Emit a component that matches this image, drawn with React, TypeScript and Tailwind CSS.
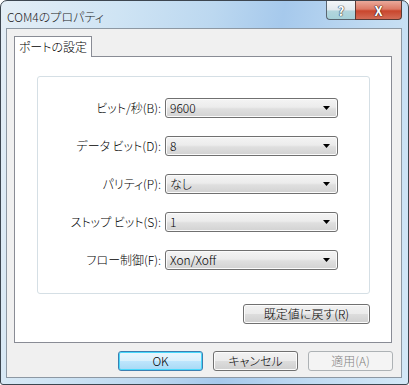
const ROWS = [
  { label: 'ビット/秒(B):', value: '9600' },
  { label: 'データ ビット(D):', value: '8' },
  { label: 'パリティ(P):', value: 'なし' },
  { label: 'ストップ ビット(S):', value: '1' },
  { label: 'フロー制御(F):', value: 'Xon/Xoff' },
];

function Combo({ value }: { value: string }) {
  return (
    <div className="flex h-[20px] w-[173px] items-center rounded-[3px] border border-[#707070] bg-[linear-gradient(#f4f4f4,#ececec_45%,#dfdfdf_55%,#d2d2d2)] pl-[4px] pr-[7px] shadow-[inset_0_0_0_1px_#fbfbfb]">
      <span className="flex-1 leading-[16px]">{value}</span>
      <svg width="7" height="4" viewBox="0 0 7 4">
        <path d="M0 0H7L3.5 4Z" fill="#000" />
      </svg>
    </div>
  );
}

function Button({
  children,
  variant = 'normal',
  className = '',
}: {
  children: React.ReactNode;
  variant?: 'normal' | 'default' | 'disabled';
  className?: string;
}) {
  const look =
    variant === 'disabled'
      ? 'border-[#adb2b5] bg-[#f4f4f4] text-[#838383]'
      : variant === 'default'
        ? 'border-[#3c7fb1] bg-[linear-gradient(#eaf6fd,#d9f0fc_50%,#bee6fd_50%,#a7d9f5)] shadow-[inset_0_0_0_1px_#48d8fb] text-black'
        : 'border-[#707070] bg-[linear-gradient(#f2f2f2,#ebebeb_50%,#dddddd_50%,#cfcfcf)] shadow-[inset_0_0_0_1px_#fcfcfc] text-black';
  return (
    <div
      className={`flex h-[20px] items-center justify-center rounded-[3px] border leading-[16px] ${look} ${className}`}
    >
      {children}
    </div>
  );
}

export default function App() {
  return (
    <div className="h-[385px] w-[409px] overflow-hidden bg-white font-['Noto_Sans_CJK_JP',sans-serif] text-[12px] font-light text-black [font-feature-settings:'palt']">
      <div className="flex h-full flex-col rounded-t-[7px] rounded-b-[3px] border border-[#3d4650] bg-[linear-gradient(100deg,#e4eef6_0%,#cfe4f4_25%,#bcd8f0_45%,#a6c9ec_60%,#c1dbf2_80%,#d4e8f7_100%)]">
        {/* Title bar */}
        <div className="flex h-[27px] items-start">
          <span className="pl-[6px] pt-[8px] leading-[16px] text-[#1b1b1b]">
            COM4のプロパティ
          </span>
          <div className="ml-auto mr-[6px] flex">
            <div className="flex h-[19px] w-[29px] items-center justify-center rounded-bl-[4px] border border-t-0 border-r-0 border-[#5a6570] bg-[linear-gradient(#f3f6f8,#e2e9ee_50%,#b3d5dd_55%,#a7d1d9)] text-[13px] font-bold leading-none text-white [text-shadow:0_0_1px_#2c3e4c,0_0_1px_#2c3e4c,0_0_1px_#2c3e4c]">
              ?
            </div>
            <div className="flex h-[19px] w-[47px] items-center justify-center rounded-br-[4px] border border-t-0 border-[#5a3a34] bg-[linear-gradient(#eaa99a,#dc7a66_45%,#c9462d_55%,#d36c56)] text-[13px] font-bold leading-none text-white [text-shadow:0_0_1px_#3b1810,0_0_1px_#3b1810,0_0_1px_#3b1810]">
              X
            </div>
          </div>
        </div>

        {/* Client area */}
        <div className="mb-[6px] ml-[5px] mr-[6px] flex flex-1 flex-col border border-[#8d98a3] bg-[#f0f0f0] pl-[7px] pr-[8px] pt-[7px]">
          {/* Tab */}
          <div className="relative z-10 -mb-px flex h-[21px] w-[78px] items-center justify-center border border-b-0 border-[#898c95] bg-white leading-[16px]">
            ポートの設定
          </div>
          <div className="flex h-[287px] w-[378px] flex-col border border-[#898c95] bg-white pl-[22px] pt-[19px]">
            <div className="flex h-[218px] w-[333px] flex-col gap-[18px] rounded-[3px] border border-[#d5dfe5] pt-[21px]">
              {ROWS.map((row) => (
                <div key={row.label} className="flex items-center gap-[4px]">
                  <span className="w-[123px] text-right leading-[16px]">
                    {row.label}
                  </span>
                  <Combo value={row.value} />
                </div>
              ))}
            </div>
            <div className="mt-[10px] flex w-[333px] justify-end">
              <Button className="w-[127px]">既定値に戻す(R)</Button>
            </div>
          </div>

          {/* Dialog buttons */}
          <div className="mt-[8px] flex justify-end gap-[10px]">
            <Button variant="default" className="w-[85px]">
              OK
            </Button>
            <Button className="w-[85px]">キャンセル</Button>
            <Button variant="disabled" className="w-[85px]">
              適用(A)
            </Button>
          </div>
        </div>
      </div>
    </div>
  );
}
